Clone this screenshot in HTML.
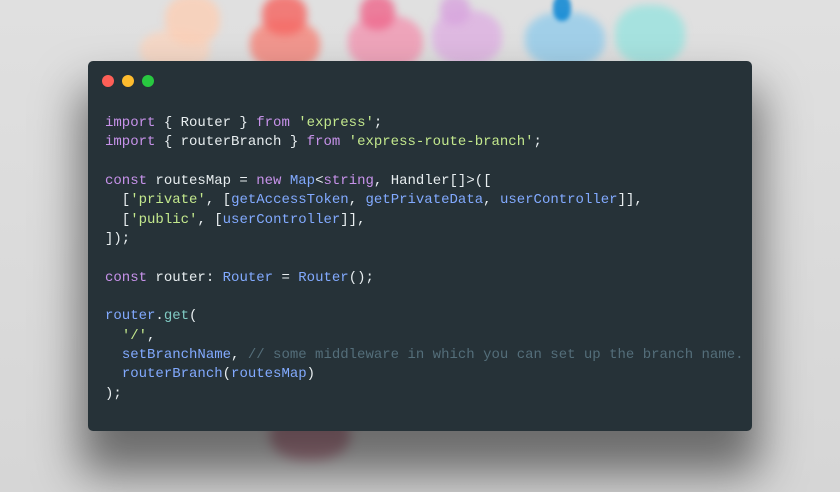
<!DOCTYPE html>
<html><head><style>
html,body{margin:0;padding:0}
body{width:840px;height:492px;overflow:hidden;position:relative;background:linear-gradient(#e0e0e0,#d6d6d6);font-family:"Liberation Mono",monospace}
.ink{position:absolute;border-radius:45%;filter:blur(4px);opacity:.85}
.win{position:absolute;left:88px;top:61px;width:664px;height:370px;background:#263238;border-radius:5px;box-shadow:0 35px 45px 8px rgba(0,0,0,0.5)}
.dot{position:absolute;top:14px;width:12px;height:12px;border-radius:50%}
pre{position:absolute;left:17px;top:53px;margin:0;font-family:"Liberation Mono",monospace;font-size:14px;line-height:19.35px;color:#e8eef0}
.k{color:#c792ea}.s{color:#c3e88d}.f{color:#82aaff}.c{color:#546e7a}.g{color:#80cbc4}
</style></head><body>
<div class="ink" style="left:140px;top:30px;width:70px;height:40px;background:#f8d6c2"></div>
<div class="ink" style="left:165px;top:-5px;width:55px;height:50px;background:#fbd0b8"></div>
<div class="ink" style="left:250px;top:20px;width:70px;height:50px;background:#f58a80"></div>
<div class="ink" style="left:262px;top:-5px;width:45px;height:40px;background:#f56a66"></div>
<div class="ink" style="left:348px;top:15px;width:75px;height:55px;background:#f19ab4"></div>
<div class="ink" style="left:360px;top:-5px;width:35px;height:35px;background:#ee6d90"></div>
<div class="ink" style="left:432px;top:10px;width:70px;height:55px;background:#deb3e2"></div>
<div class="ink" style="left:440px;top:-5px;width:30px;height:30px;background:#d8a6de"></div>
<div class="ink" style="left:525px;top:12px;width:80px;height:55px;background:#97cdea"></div>
<div class="ink" style="left:553px;top:-5px;width:18px;height:26px;background:#0a86d4;filter:blur(2px)"></div>
<div class="ink" style="left:615px;top:5px;width:70px;height:60px;background:#9de3df"></div>
<div class="ink" style="left:270px;top:410px;width:80px;height:50px;background:#a0455e;opacity:.5;filter:blur(6px)"></div>
<div class="win">
<div class="dot" style="left:14px;background:#fe5f57"></div>
<div class="dot" style="left:34px;background:#febc2e"></div>
<div class="dot" style="left:54px;background:#28c840"></div>
<pre><span class="k">import</span> { Router } <span class="k">from</span> <span class="s">'express'</span>;
<span class="k">import</span> { routerBranch } <span class="k">from</span> <span class="s">'express-route-branch'</span>;

<span class="k">const</span> routesMap = <span class="k">new</span> <span class="f">Map</span>&lt;<span class="k">string</span>, Handler[]&gt;([
  [<span class="s">'private'</span>, [<span class="f">getAccessToken</span>, <span class="f">getPrivateData</span>, <span class="f">userController</span>]],
  [<span class="s">'public'</span>, [<span class="f">userController</span>]],
]);

<span class="k">const</span> router: <span class="f">Router</span> = <span class="f">Router</span>();

<span class="f">router</span>.<span class="g">get</span>(
  <span class="s">'/'</span>,
  <span class="f">setBranchName</span>, <span class="c">// some middleware in which you can set up the branch name.</span>
  <span class="f">routerBranch</span>(<span class="f">routesMap</span>)
);</pre>
</div>
</body></html>
